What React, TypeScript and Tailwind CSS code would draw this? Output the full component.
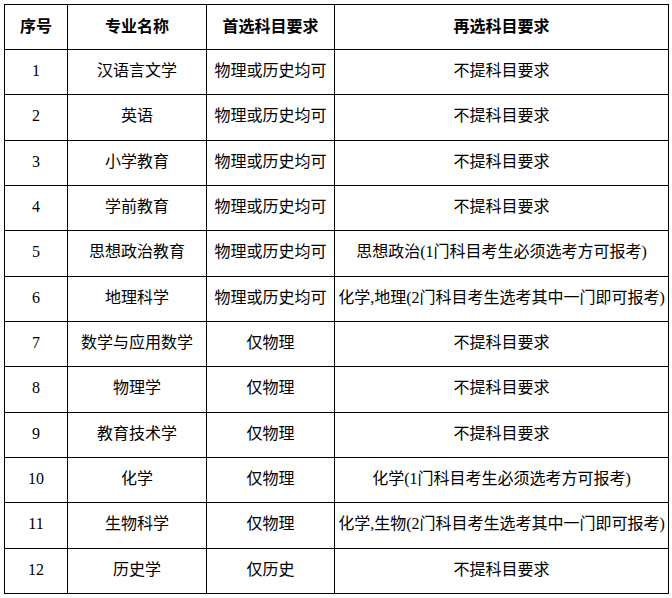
import React from "react";

const rows: [string, string, string, string][] = [
  ["1", "汉语言文学", "物理或历史均可", "不提科目要求"],
  ["2", "英语", "物理或历史均可", "不提科目要求"],
  ["3", "小学教育", "物理或历史均可", "不提科目要求"],
  ["4", "学前教育", "物理或历史均可", "不提科目要求"],
  ["5", "思想政治教育", "物理或历史均可", "思想政治(1门科目考生必须选考方可报考)"],
  ["6", "地理科学", "物理或历史均可", "化学,地理(2门科目考生选考其中一门即可报考)"],
  ["7", "数学与应用数学", "仅物理", "不提科目要求"],
  ["8", "物理学", "仅物理", "不提科目要求"],
  ["9", "教育技术学", "仅物理", "不提科目要求"],
  ["10", "化学", "仅物理", "化学(1门科目考生必须选考方可报考)"],
  ["11", "生物科学", "仅物理", "化学,生物(2门科目考生选考其中一门即可报考)"],
  ["12", "历史学", "仅历史", "不提科目要求"],
];

export default function App() {
  return (
    <div className="w-[672px] h-[598px] bg-white pl-[4px] pt-[4px]">
      <table
        className="border-collapse table-fixed w-[664px] text-[16px] text-black"
        style={{ fontFamily: '"Liberation Serif", "Noto Sans CJK SC", serif' }}
      >
        <colgroup>
          <col className="w-[63px]" />
          <col className="w-[139px]" />
          <col className="w-[128px]" />
          <col className="w-[334px]" />
        </colgroup>
        <thead>
          <tr className="h-[45px]">
            {["序号", "专业名称", "首选科目要求", "再选科目要求"].map((h) => (
              <th
                key={h}
                className="border border-black text-center align-middle font-bold p-0 pb-[4px]"
                style={{ fontFamily: '"Noto Sans CJK SC", sans-serif' }}
              >
                {h}
              </th>
            ))}
          </tr>
        </thead>
        <tbody>
          {rows.map((r) => (
            <tr key={r[0]} className="h-[45.33px]">
              {r.map((c, i) => (
                <td
                  key={i}
                  className="border border-black text-center align-middle p-0 pb-[2px] whitespace-nowrap"
                >
                  {c}
                </td>
              ))}
            </tr>
          ))}
        </tbody>
      </table>
    </div>
  );
}
